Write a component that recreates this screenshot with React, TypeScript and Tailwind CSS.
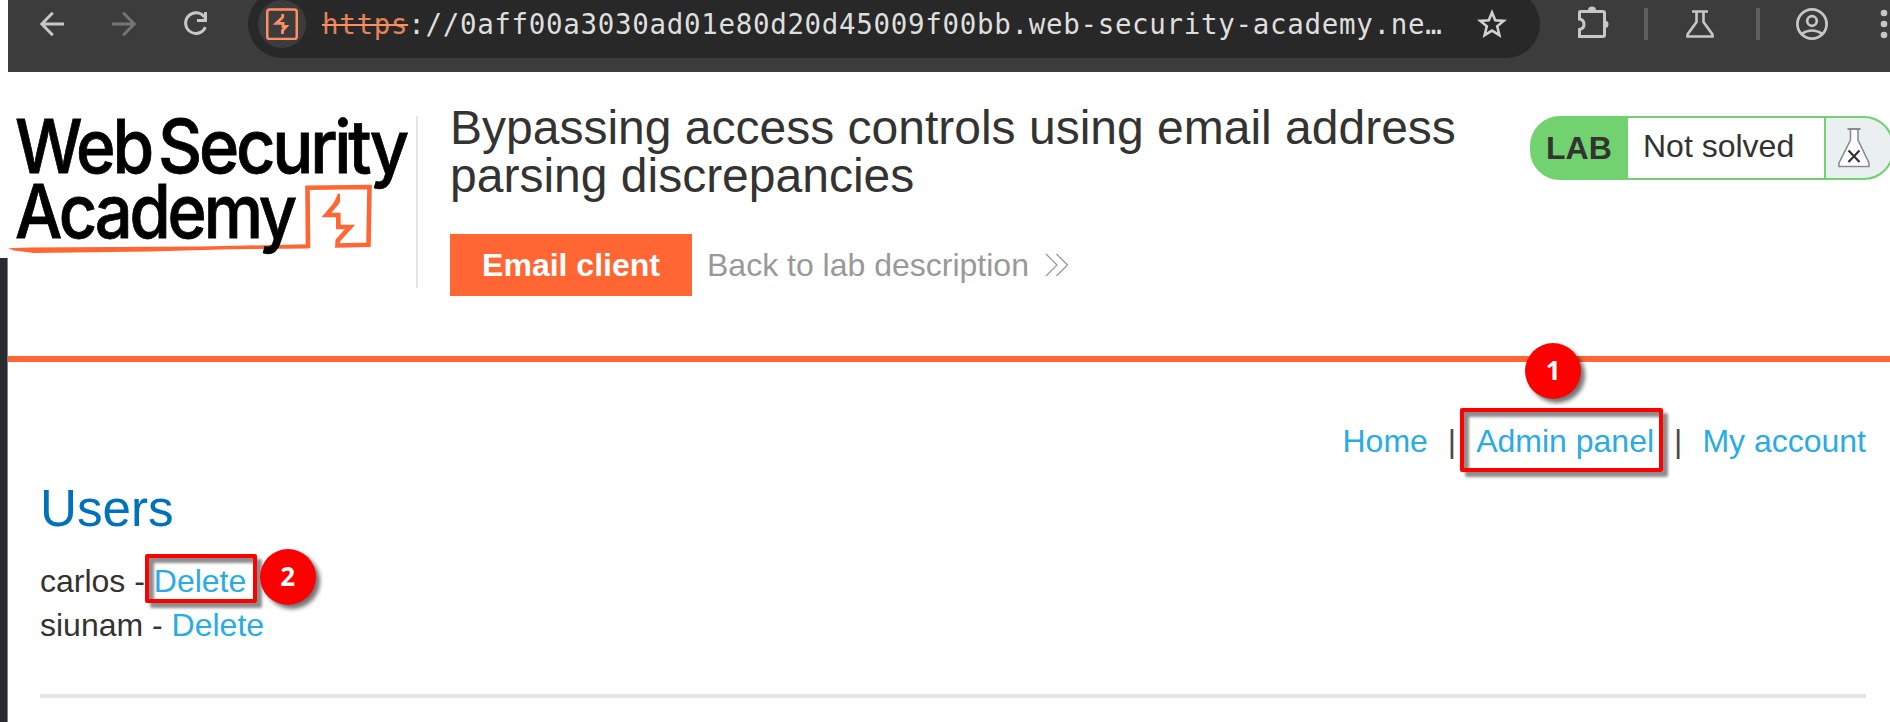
import type { ReactNode } from "react";

function Toolbar() {
  return (
    <div className="flex h-[72px] items-center overflow-hidden bg-[#3c3c3c] pb-6">
      <svg className="ml-8 h-8 w-8 shrink-0" viewBox="0 0 32 32" fill="none" stroke="#c7c7c7" strokeWidth="3">
        <path d="M24 16H2M12.8 4.8L1.8 16l11 11.2" />
      </svg>
      <svg className="ml-10 h-8 w-8 shrink-0" viewBox="0 0 32 32" fill="none" stroke="#757575" strokeWidth="3">
        <path d="M0 16H22M11.2 4.8L22.2 16l-11 11.2" />
      </svg>
      <svg className="ml-[39px] h-8 w-8 shrink-0" viewBox="0 0 32 32" fill="none" stroke="#c7c7c7" strokeWidth="3">
        <path d="M21.4 9.2A10.3 10.3 0 1 0 22.4 19.2" />
        <path d="M22.5 4v8.5H14" />
      </svg>

      <div className="ml-[33px] flex h-[68px] w-[1292px] shrink-0 items-center rounded-full bg-[#282828]">
        <span className="ml-[10px] flex h-12 w-12 shrink-0 items-center justify-center rounded-full bg-[#3c3c3c]">
          <svg className="h-8 w-8" viewBox="0 0 32 32" fill="none" stroke="#ff8f62">
            <rect x="1.25" y="1.5" width="29.5" height="29.5" rx="2.5" strokeWidth="2.5" />
            <path d="M16.7 6V9.2L10.2 15.4H17V18.5H20.3L16.5 22.5V26" strokeWidth="2.8" />
          </svg>
        </span>
        <span className="ml-4 w-[1130px] shrink-0 whitespace-pre font-['DejaVu_Sans_Mono',monospace] text-[27.5px] leading-[40px] tracking-[0.68px] text-[#dedede]">
          <span className="text-[#e58259] line-through decoration-[#ff8f62] decoration-2">https</span>
          ://0aff00a3030ad01e80d20d45009f00bb.web-security-academy.ne…
        </span>
        <svg className="ml-[23px] h-8 w-8 shrink-0" viewBox="0 0 32 32" fill="none" stroke="#d0d0d0" strokeWidth="2.6">
          <path d="M17 4.5L20.2 12.3L28.7 12.9L22.2 18.3L24.4 27.2L17 22.6L9.6 27.2L11.8 18.3L5.3 12.9L13.8 12.3Z" />
        </svg>
      </div>

      <svg className="ml-[38px] h-9 w-8 shrink-0" viewBox="0 0 32 36" fill="none" stroke="#c7c7c7" strokeWidth="3">
        <path d="M1.5 13V6Q1.5 5.5 2.5 5.5H25Q26.5 5.5 26.5 7V29Q26.5 30.5 25 30.5H1.5V23.5Q6 22.5 6 18.2T1.5 13Z" />
        <path d="M10 4.5A4 4 0 0 1 18 4.5ZM28 14.5A4 4 0 0 1 28 22Z" fill="#c7c7c7" stroke="none" />
      </svg>
      <span className="ml-[34px] h-8 w-1 shrink-0 bg-[#5f5f5f]" />
      <svg className="ml-[38px] h-7 w-7 shrink-0" viewBox="0 0 28 28" fill="none" stroke="#c7c7c7" strokeWidth="2.6">
        <path d="M6 1.5H22M10.5 2V12L1.5 24.5V26.5H26.5V24.5L17.5 12V2" />
      </svg>
      <span className="ml-[42px] h-8 w-1 shrink-0 bg-[#5f5f5f]" />
      <svg className="ml-9 h-8 w-8 shrink-0" viewBox="0 0 32 32" fill="none" stroke="#c7c7c7" strokeWidth="2.7">
        <circle cx="16" cy="16" r="14.6" />
        <circle cx="16" cy="13" r="4.8" />
        <path d="M5.5 26Q16 19 26.5 26" />
      </svg>
      <svg className="ml-[52px] h-8 w-2 shrink-0" viewBox="0 0 8 32" fill="#c7c7c7">
        <circle cx="4" cy="5" r="3.3" />
        <circle cx="4" cy="16" r="3.3" />
        <circle cx="4" cy="27" r="3.3" />
      </svg>
    </div>
  );
}

function Logo() {
  return (
    <svg className="h-[172px] w-[408px] shrink-0 overflow-visible" viewBox="8 116 408 172">
      <path
        d="M8 248.2L30 247.4L200 246.6L308 244.2L309 248.6L230 249.2L150 251.6L34 253L14 250.6Z"
        fill="#ff6633"
      />
      <path d="M308 248L307.5 187.8L369.5 187L368.5 244.8L337.5 245.5L337.8 240.5L350 227H338.3V215H326.5L337 202.5" fill="none" stroke="#ff6633" strokeWidth="4.6" />
      <path d="M338 193.5L340 194V202L336.5 206.5L333.5 203.5Z" fill="#ff6633" />
      <g fill="#000" stroke="#000" strokeWidth="0.8" className="font-['Inter',sans-serif] text-[74px] font-medium tracking-[-3.5px]">
        <text x="15" y="173" textLength="136" lengthAdjust="spacingAndGlyphs">Web</text>
        <text x="158" y="173" textLength="248" lengthAdjust="spacingAndGlyphs">Security</text>
        <text x="15" y="237.6" textLength="279" lengthAdjust="spacingAndGlyphs">Academy</text>
      </g>
    </svg>
  );
}

function LabStatus() {
  return (
    <div className="mt-11 flex h-16 w-[364px] shrink-0 overflow-hidden rounded-[30px] border-2 border-[#72d26f] bg-[#72d26f]">
      <span className="w-24 shrink-0 pl-[14px] pt-0.5 text-[32px] font-bold leading-[56px]">LAB</span>
      <span className="w-[196px] shrink-0 bg-white pl-[15px] text-[32px] leading-[57px]">Not solved</span>
      <span className="ml-0.5 flex-1 bg-[#eaf0f2] pl-3 pt-[10px]">
        <svg className="h-10 w-8" viewBox="0 0 32 40" fill="none" stroke="#8a8c8d" strokeWidth="1.6">
          <path d="M12.5 1V12L1 35V38.5H31V35L20 12V1" fill="#fff" />
          <path d="M9.5 1H22.5" strokeWidth="2" />
          <path d="M10.5 22.5L21.5 34M21.5 22.5L10.5 34" stroke="#333332" strokeWidth="2.2" />
        </svg>
      </span>
    </div>
  );
}

function Badge({ children }: { children: ReactNode }) {
  return (
    <span className="flex h-14 w-14 items-center justify-center rounded-full bg-[#ff0000] pb-0.5 font-['Open_Sans',sans-serif] text-[26px] font-bold leading-none text-white shadow-[4px_4px_4px_rgba(0,0,0,0.55)]">
      {children}
    </span>
  );
}

const frame =
  "absolute rounded-[2px] border-4 border-[#ff0000] shadow-[5px_5px_3px_rgba(0,0,0,0.45),inset_5px_5px_3px_rgba(0,0,0,0.45)]";

export default function App() {
  return (
    <div className="flex h-[722px] w-[1890px] overflow-hidden bg-white font-['Liberation_Sans',Arial,sans-serif] text-[#333332]">
      <div className="w-2 shrink-0 pt-[258px]">
        <div className="h-full border-r border-[#7f8184] bg-[#2a2c31]" />
      </div>
      <div className="flex min-w-0 flex-1 flex-col">
        <Toolbar />
        <header className="flex h-[290px] shrink-0 border-b-[6px] border-[#ff6633]">
          <div className="mt-11 flex h-[172px] shrink-0 border-r-2 border-[#e5e5e5]">
            <Logo />
          </div>
          <div className="ml-8 mt-8 w-[1080px] shrink-0">
            <h2 className="text-[48px] leading-[48px]">
              Bypassing access controls using email address
              <br />
              parsing discrepancies
            </h2>
            <div className="mt-[34px] flex items-center">
              <a className="flex h-[62px] w-[242px] items-center justify-center bg-[#ff6633] text-[32px] font-bold text-white">
                Email client
              </a>
              <a className="ml-[15px] flex items-center text-[32px] text-[#999999]">
                Back to lab description
                <svg className="ml-4 h-6 w-6" viewBox="0 0 24 24" fill="none" stroke="#999999" strokeWidth="1.3">
                  <path d="M1 1L12 12L1 23M11.5 1L22.5 12L11.5 23" />
                </svg>
              </a>
            </div>
          </div>
          <LabStatus />
        </header>

        <main className="pl-8 pr-6 text-[32px] leading-[44px]">
          <nav className="flex justify-end whitespace-pre pt-[57px]">
            <a className="text-[#29abe5]">Home</a>
            <span className="mx-5 text-[#4a4a49]">|</span>
            <span className="relative">
              <a className="text-[#29abe5]">Admin panel</a>
              <span className={`${frame} -left-[16px] -top-[11px] h-[64px] w-[203px]`} />
              <span className="absolute -top-[76px] left-[49px]">
                <Badge>1</Badge>
              </span>
            </span>
            <span className="mx-5 text-[#4a4a49]">|</span>
            <a className="text-[#29abe5]">My account</a>
          </nav>
          <h1 className="mt-[18px] text-[51.2px] leading-[56px] text-[#0071bc]">Users</h1>
          <p className="mt-[22px] flex whitespace-pre">
            carlos -{" "}
            <span className="relative">
              <a className="text-[#29abe5]">Delete</a>
              <span className={`${frame} -left-[9px] -top-[5px] h-[49px] w-[112px]`} />
              <span className="absolute -top-[10px] left-[106px]">
                <Badge>2</Badge>
              </span>
            </span>
          </p>
          <p className="whitespace-pre">
            siunam - <a className="text-[#29abe5]">Delete</a>
          </p>
          <hr className="mt-[47px] border-t-4 border-[#e5e5e5]" />
        </main>
      </div>
    </div>
  );
}
